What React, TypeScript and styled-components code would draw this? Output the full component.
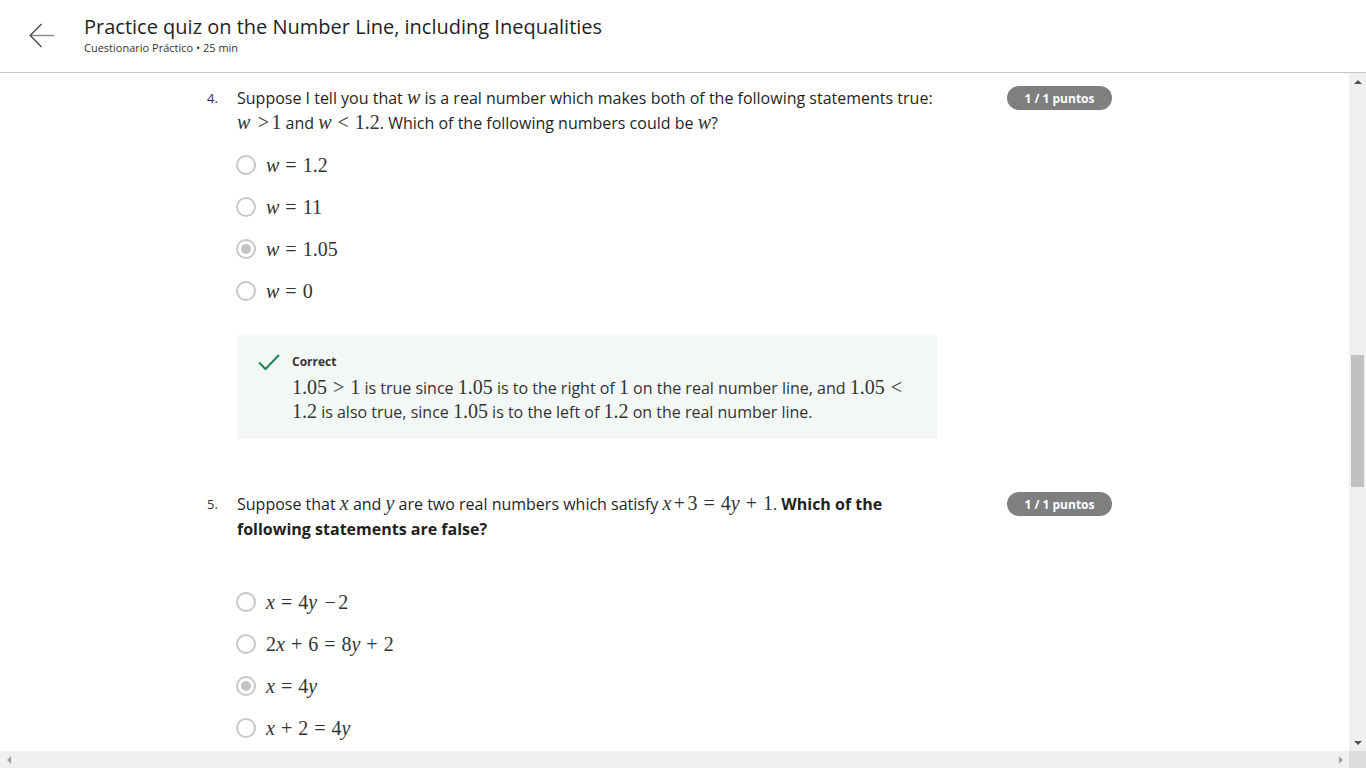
import React, { useLayoutEffect, useRef, useState } from "react";
import styled, { createGlobalStyle, css } from "styled-components";

const GlobalStyle = createGlobalStyle`
  html, body, #root { margin: 0; padding: 0; height: 100%; }
  body {
    font-family: "Open Sans", "Liberation Sans", sans-serif;
    color: #1f1f1f;
    background: #ffffff;
    overflow: hidden;
  }
  * { box-sizing: border-box; }
`;

const Page = styled.div`
  display: flex;
  flex-direction: column;
  height: 100vh;
`;

const Header = styled.header`
  flex: 0 0 73px;
  display: flex;
  align-items: center;
  padding-left: 29px;
  border-bottom: 1px solid #c8c8c8;
  background: #fff;
`;

const BackButton = styled.button`
  width: 26px;
  height: 26px;
  padding: 0;
  border: 0;
  background: none;
  display: flex;
  align-items: center;
  justify-content: center;
  cursor: pointer;
  margin-right: 29px;
`;

const TitleBlock = styled.div`
  display: flex;
  flex-direction: column;
  gap: 1px;
  margin-top: -2px;
`;

const Title = styled.h1`
  margin: 0;
  font-size: 20px;
  line-height: 24px;
  font-weight: 400;
  color: #1f1f1f;
`;

const Subtitle = styled.div`
  font-size: 11px;
  line-height: 16px;
  color: #333;
`;

/* ---- scroll frame with classic scrollbars ---- */

const Frame = styled.div`
  flex: 1 1 auto;
  min-height: 0;
  display: grid;
  grid-template-columns: 1fr 17px;
  grid-template-rows: 1fr 17px;
`;

const Viewport = styled.main`
  min-height: 0;
  overflow: hidden;
  background: #fff;
`;

const VBar = styled.div`
  display: flex;
  flex-direction: column;
  background: #f0f0f0;
`;

const HBar = styled.div`
  display: flex;
  align-items: stretch;
  background: #f0f0f0;
`;

const Corner = styled.div`
  background: #dcdcdc;
`;

type Dir = "up" | "down" | "left" | "right";

const arrowShape = (dir: Dir, color: string) => {
  switch (dir) {
    case "up":
      return css`border-left: 4px solid transparent; border-right: 4px solid transparent; border-bottom: 4px solid ${color};`;
    case "down":
      return css`border-left: 4px solid transparent; border-right: 4px solid transparent; border-top: 4px solid ${color};`;
    case "left":
      return css`border-top: 4px solid transparent; border-bottom: 4px solid transparent; border-right: 4px solid ${color};`;
    default:
      return css`border-top: 4px solid transparent; border-bottom: 4px solid transparent; border-left: 4px solid ${color};`;
  }
};

const ArrowButton = styled.div<{ $dir: Dir; $disabled?: boolean }>`
  flex: 0 0 17px;
  width: 17px;
  height: 17px;
  display: flex;
  align-items: center;
  justify-content: center;
  &::before {
    content: "";
    width: 0;
    height: 0;
    ${(p) => arrowShape(p.$dir, p.$disabled ? "#a3a3a3" : "#505050")}
  }
`;

const VTrack = styled.div`
  flex: 1 1 auto;
  display: flex;
  flex-direction: column;
  padding: 0 2px;
`;

const HTrack = styled.div`
  flex: 1 1 auto;
`;

const Thumb = styled.div`
  background: #c1c1c1;
  flex: 0 0 auto;
`;

/* ---- quiz content ---- */

const Column = styled.div`
  width: 935px;
  margin: 0 auto;
  padding: 111px 0 60px;
`;

const Intro = styled.section`
  display: flex;
  gap: 48px;
  padding: 8px 0 60px 30px;
  font-size: 14px;
  color: #333;
`;

const IntroItem = styled.div`
  display: flex;
  flex-direction: column;
  gap: 4px;
  strong { font-size: 20px; color: #1f8354; }
`;

const QuestionSection = styled.section`
  display: grid;
  grid-template-columns: 30px 700px 1fr;
  align-items: start;
  padding-bottom: 53px;
`;

const QNumber = styled.div`
  font-size: 13px;
  line-height: 25px;
  color: #333;
`;

const QBody = styled.div`
  display: flex;
  flex-direction: column;
`;

const QText = styled.p`
  margin: 0;
  font-size: 16px;
  line-height: 25px;
  color: #1f1f1f;
  b { font-weight: 700; }
`;

const Badge = styled.div`
  justify-self: end;
  margin-right: 30px;
  width: 105px;
  height: 24px;
  border-radius: 12px;
  background: #7f7f7f;
  color: #fff;
  font-size: 12px;
  font-weight: 700;
  display: flex;
  align-items: center;
  justify-content: center;
`;

const OptionList = styled.div<{ $spaced?: boolean }>`
  display: flex;
  flex-direction: column;
  margin-top: ${(p) => (p.$spaced ? "39px" : "8px")};
`;

const OptionRow = styled.label`
  height: 42px;
  display: flex;
  align-items: center;
  gap: 10px;
  margin-left: -1px;
  color: #333;
`;

const Radio = styled.input`
  appearance: none;
  margin: 0;
  width: 20px;
  height: 20px;
  border-radius: 50%;
  border: 2px solid #c8c8c8;
  background: #fff;
  display: grid;
  place-items: center;
  &:checked::after {
    content: "";
    width: 10px;
    height: 10px;
    border-radius: 50%;
    background: #c4c4c4;
  }
`;

const Math = styled.span`
  font-family: "Liberation Serif", "DejaVu Serif", serif;
  font-size: 20px;
  line-height: 1;
  color: #333;
  white-space: nowrap;
`;

const V = styled.i`
  font-style: italic;
`;

const Op = styled.span<{ $tight?: boolean }>`
  margin: 0 ${(p) => (p.$tight ? "0.12em" : "0.3em")};
`;

const Feedback = styled.div`
  margin-top: 23px;
  background: #f3f8f6;
  padding: 18px 28px 15px 21px;
  display: grid;
  grid-template-columns: 22px 1fr;
  column-gap: 12px;
  row-gap: 5px;
`;

const FeedbackTitle = styled.div`
  font-size: 12px;
  font-weight: 700;
  line-height: 18px;
  color: #333;
`;

const FeedbackText = styled.p`
  grid-column: 2;
  margin: 0;
  font-size: 16px;
  line-height: 24px;
  color: #333;
`;

const Footer = styled.footer`
  display: flex;
  gap: 16px;
  padding: 40px 0 263px 30px;
  font-size: 14px;
  color: #333;
`;

const FooterButton = styled.button`
  font-family: inherit;
  font-size: 14px;
  padding: 8px 16px;
  border: 1px solid #0056d2;
  background: #fff;
  color: #0056d2;
  border-radius: 4px;
`;

const BackArrow = () => (
  <svg width="26" height="26" viewBox="0 0 26 26" fill="none">
    <path d="M1.5 12.5H25" stroke="#888" strokeWidth="1.4" />
    <path d="M12.5 1L1.2 12.5L12.5 24" stroke="#444" strokeWidth="1.3" />
  </svg>
);

const CheckIcon = () => (
  <svg width="22" height="18" viewBox="0 0 22 18" fill="none">
    <path d="M1 9.5L7.5 16L21 2" stroke="#1f8354" strokeWidth="2" />
  </svg>
);

type Opt = { content: React.ReactNode; checked?: boolean };

type Q = {
  n: number;
  text: React.ReactNode;
  spaced?: boolean;
  options: Opt[];
  feedback: React.ReactNode;
};

const Question = React.forwardRef<HTMLElement, { q: Q }>(({ q }, ref) => (
  <QuestionSection ref={ref}>
    <QNumber>{q.n}.</QNumber>
    <QBody>
      <QText>{q.text}</QText>
      <OptionList $spaced={q.spaced} role="radiogroup">
        {q.options.map((o, i) => (
          <OptionRow key={i}>
            <Radio type="radio" name={`q${q.n}`} defaultChecked={o.checked} disabled />
            {o.content}
          </OptionRow>
        ))}
      </OptionList>
      <Feedback>
        <CheckIcon />
        <FeedbackTitle>Correct</FeedbackTitle>
        <FeedbackText>{q.feedback}</FeedbackText>
      </Feedback>
    </QBody>
    <Badge>1 / 1 puntos</Badge>
  </QuestionSection>
));

const eq = (l: React.ReactNode, r: React.ReactNode) => (
  <Math>
    {l}
    <Op>=</Op>
    {r}
  </Math>
);

const w = <V>w</V>;
const x = <V>x</V>;
const y = <V>y</V>;

const questions: Q[] = [
  {
    n: 1,
    text: (
      <>
        Which of the following numbers is the largest? Remember that on the real number line, larger
        numbers are further to the right.
      </>
    ),
    options: [
      { content: <Math>−3</Math> },
      { content: <Math>−0.5</Math> },
      { content: <Math>0.25</Math>, checked: true },
      { content: <Math>−10</Math> },
    ],
    feedback: (
      <>
        <Math>0.25</Math> is the only positive number listed, so it lies furthest to the right on the
        real number line.
      </>
    ),
  },
  {
    n: 2,
    text: (
      <>
        Suppose that <Math>{x}</Math> is a real number with <Math>{x}<Op>&gt;</Op>2</Math>. Which of the
        following must also be true?
      </>
    ),
    options: [
      { content: eq(x, "2") },
      { content: <Math>{x}<Op>&gt;</Op>3</Math> },
      { content: <Math>{x}<Op>&gt;</Op>1</Math>, checked: true },
      { content: <Math>{x}<Op>&lt;</Op>0</Math> },
    ],
    feedback: (
      <>
        Any number to the right of <Math>2</Math> on the real number line is also to the right of{" "}
        <Math>1</Math>.
      </>
    ),
  },
  {
    n: 3,
    text: (
      <>
        Which of the following describes the set of all real numbers <Math>{x}</Math> with{" "}
        <Math>−1<Op>≤</Op>{x}<Op>&lt;</Op>4</Math>?
      </>
    ),
    options: [
      { content: <Math>(−1, 4)</Math> },
      { content: <Math>[−1, 4)</Math>, checked: true },
      { content: <Math>[−1, 4]</Math> },
      { content: <Math>(−1, 4]</Math> },
    ],
    feedback: (
      <>
        The endpoint <Math>−1</Math> is included, so we use a square bracket, and <Math>4</Math> is
        excluded, so we use a parenthesis.
      </>
    ),
  },
  {
    n: 4,
    text: (
      <>
        Suppose I tell you that <Math>{w}</Math> is a real number which makes both of the following
        statements true: <Math>{w}<Op $tight>&nbsp;&gt;</Op>1</Math> and <Math>{w}<Op>&lt;</Op>1.2</Math>.
        Which of the following numbers could be <Math>{w}</Math>?
      </>
    ),
    options: [
      { content: eq(w, "1.2") },
      { content: eq(w, "11") },
      { content: eq(w, "1.05"), checked: true },
      { content: eq(w, "0") },
    ],
    feedback: (
      <>
        <Math>1.05<Op>&gt;</Op>1</Math> is true since <Math>1.05</Math> is to the right of{" "}
        <Math>1</Math> on the real number line, and <Math>1.05<Op>&lt;</Op></Math>{" "}
        <Math>1.2</Math> is also true, since <Math>1.05</Math> is to the left of <Math>1.2</Math> on
        the real number line.
      </>
    ),
  },
  {
    n: 5,
    text: (
      <>
        Suppose that <Math>{x}</Math> and <Math>{y}</Math> are two real numbers which satisfy{" "}
        <Math>{x}<Op $tight>+</Op>3<Op>=</Op>4{y}<Op>+</Op>1</Math>.{" "}
        <b>Which of the following statements are false?</b>
      </>
    ),
    spaced: true,
    options: [
      { content: eq(x, <>4{y}<Op $tight>&nbsp;−</Op>2</>) },
      { content: eq(<>2{x}<Op>+</Op>6</>, <>8{y}<Op>+</Op>2</>) },
      { content: eq(x, <>4{y}</>), checked: true },
      { content: eq(<>{x}<Op>+</Op>2</>, <>4{y}</>) },
    ],
    feedback: (
      <>
        Subtracting <Math>3</Math> from both sides gives <Math>{x}<Op>=</Op>4{y}<Op>−</Op>2</Math>,
        so <Math>{x}<Op>=</Op>4{y}</Math> cannot hold.
      </>
    ),
  },
  {
    n: 6,
    text: (
      <>
        Which of the following real numbers lies between <Math>−2</Math> and <Math>−1</Math> on the
        real number line?
      </>
    ),
    options: [
      { content: <Math>−2.5</Math> },
      { content: <Math>−1.5</Math>, checked: true },
      { content: <Math>−0.5</Math> },
      { content: <Math>1.5</Math> },
    ],
    feedback: (
      <>
        <Math>−1.5</Math> is to the right of <Math>−2</Math> and to the left of <Math>−1</Math>.
      </>
    ),
  },
  {
    n: 7,
    text: (
      <>
        Suppose that <Math>{x}<Op>&lt;</Op>{y}</Math>. Which of the following statements must also be
        true?
      </>
    ),
    options: [
      { content: <Math>−{x}<Op>&lt;</Op>−{y}</Math> },
      { content: <Math>{x}<Op>+</Op>5<Op>&lt;</Op>{y}<Op>+</Op>5</Math>, checked: true },
      { content: <Math>{x}<Op>&gt;</Op>{y}</Math> },
      { content: <Math>2{x}<Op>&gt;</Op>2{y}</Math> },
    ],
    feedback: (
      <>
        Adding the same number to both sides of an inequality keeps the inequality true.
      </>
    ),
  },
];

export default function App() {
  const scrollRef = useRef<HTMLElement>(null);
  const targetRef = useRef<HTMLElement>(null);
  const trackRef = useRef<HTMLDivElement>(null);
  const [thumb, setThumb] = useState({ top: 0, height: 0 });

  useLayoutEffect(() => {
    const s = scrollRef.current;
    const t = targetRef.current;
    const tr = trackRef.current;
    if (!s || !t || !tr) return;
    s.scrollTop = t.offsetTop - s.offsetTop - 13;
    const track = tr.clientHeight;
    const ratio = s.clientHeight / s.scrollHeight;
    setThumb({
      top: Math_round((s.scrollTop / s.scrollHeight) * track),
      height: Math_round(Math_max(20, ratio * track)),
    });
  }, []);

  return (
    <>
      <GlobalStyle />
      <Page>
        <Header>
          <BackButton aria-label="Volver">
            <BackArrow />
          </BackButton>
          <TitleBlock>
            <Title>Practice quiz on the Number Line, including Inequalities</Title>
            <Subtitle>Cuestionario Práctico • 25 min</Subtitle>
          </TitleBlock>
        </Header>
        <Frame>
          <Viewport ref={scrollRef}>
            <Column>
              <Intro>
                <IntroItem>
                  Calificación recibida
                  <strong>100 %</strong>
                </IntroItem>
                <IntroItem>
                  Para Aprobar
                  <strong>80 % o más</strong>
                </IntroItem>
              </Intro>
              {questions.map((q) => (
                <Question key={q.n} q={q} ref={q.n === 4 ? targetRef : undefined} />
              ))}
              <Footer>
                <FooterButton>Ir al siguiente elemento</FooterButton>
              </Footer>
            </Column>
          </Viewport>
          <VBar>
            <ArrowButton $dir="up" />
            <VTrack ref={trackRef}>
              <Thumb style={{ marginTop: thumb.top, height: thumb.height }} />
            </VTrack>
            <ArrowButton $dir="down" />
          </VBar>
          <HBar>
            <ArrowButton $dir="left" $disabled />
            <HTrack />
            <ArrowButton $dir="right" $disabled />
          </HBar>
          <Corner />
        </Frame>
      </Page>
    </>
  );
}

const Math_round = (n: number) => globalThis.Math.round(n);
const Math_max = (a: number, b: number) => globalThis.Math.max(a, b);
